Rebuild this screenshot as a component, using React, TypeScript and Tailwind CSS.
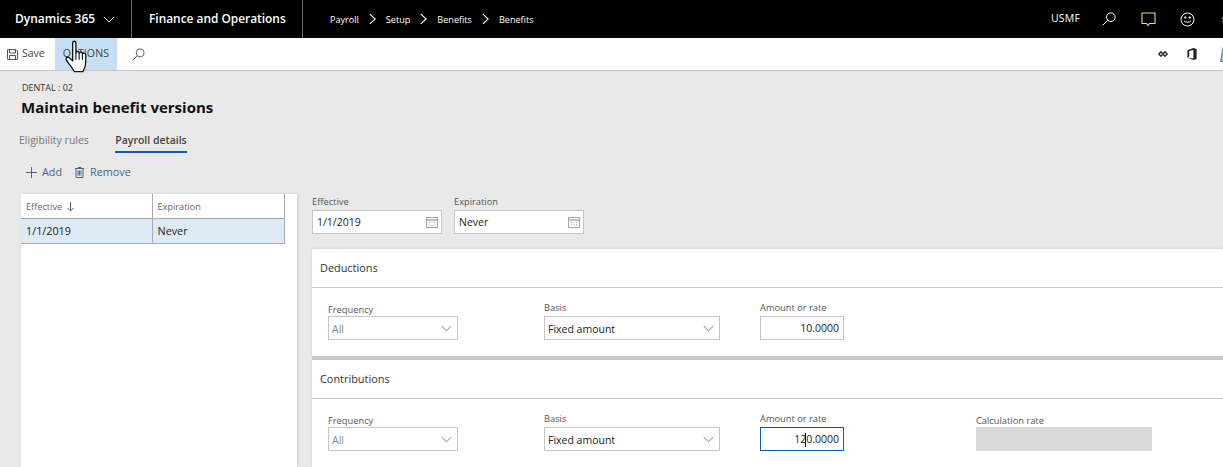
import React from "react";

const Chevron = ({ className = "" }: { className?: string }) => (
  <svg viewBox="0 0 14 8" className={className} fill="none" stroke="currentColor" strokeWidth="1.1">
    <path d="M1 1l6 6 6-6" />
  </svg>
);

const Crumb = () => (
  <svg viewBox="0 0 8 12" className="w-[7px] h-[12px] text-white" fill="none" stroke="currentColor" strokeWidth="1.300">
    <path d="M1 .5L7 6l-6 5.500" />
  </svg>
);

const Search = ({ className = "" }: { className?: string }) => (
  <svg viewBox="0 0 14 14" className={className} fill="none" stroke="currentColor" strokeWidth="1">
    <circle cx="8.800" cy="5.200" r="4.300" />
    <path d="M5.700 8.300L.7 13.300" />
  </svg>
);

const Calendar = () => (
  <svg viewBox="0 0 12 11" className="w-[12px] h-[11px] text-[#a8a8a8]" fill="none" stroke="currentColor" strokeWidth="1">
    <rect x=".5" y=".5" width="11" height="10" />
    <path d="M.5 3h11" strokeWidth="1.500" />
    <path d="M3 5.500h1M5.500 5.500h1M8 5.500h1M3 8h1M5.500 8h1M8 8h1" />
  </svg>
);

const DateField = ({ label, value, width }: { label: string; value: string; width: string }) => (
  <div className={width}>
    <div className="text-[9.300px] leading-[13px] text-[#555] h-[15px]">{label}</div>
    <div className="h-[24px] bg-white border border-[#c6c6c6] flex items-center justify-between pl-[4px] pr-[3px] text-[10.500px] text-[#222]">
      <span className="pt-[1px]">{value}</span>
      <Calendar />
    </div>
  </div>
);

const SelectField = ({
  label,
  value,
  width,
  muted,
  labelClass,
}: {
  label: string;
  value: string;
  width: string;
  muted?: boolean;
  labelClass: string;
}) => (
  <div className={width}>
    <div className={`text-[9.300px] leading-[13px] text-[#555] h-[16px] ${labelClass}`}>{label}</div>
    <div
      className={`h-[24px] bg-white border border-[#c6c6c6] flex items-center justify-between pl-[3px] pr-[3px] text-[10.500px] ${
        muted ? "text-[#7a8aa0]" : "text-[#222]"
      }`}
    >
      <span className="pt-[3px]">{value}</span>
      <Chevron className="w-[11px] h-[7px] mr-[2px] text-[#666]" />
    </div>
  </div>
);

const AmountField = ({ value, focused }: { value: React.ReactNode; focused?: boolean }) => (
  <div className="w-[84px]">
    <div className="text-[9.300px] leading-[13px] text-[#555] h-[16px] pt-[1px]">Amount or rate</div>
    <div
      className={`h-[24px] bg-white flex items-center justify-end pr-[4px] pt-[2px] text-[10.500px] text-[#222] border ${
        focused ? "border-[#0f5ba7]" : "border-[#c6c6c6]"
      }`}
    >
      {value}
    </div>
  </div>
);

const Section = ({ title, children }: { title: string; children: React.ReactNode }) => (
  <section className="bg-white h-[107px] shadow-[0_0_3px_rgba(0,0,0,0.12)]">
    <div className="h-[39px] border-b border-[#c8c8c8] flex items-center pl-[8px] text-[10.900px] text-[#333]">
      {title}
    </div>
    <div className="flex pt-[12px] pl-[16px]">{children}</div>
  </section>
);

const FormRow = ({ amount, extra, focused }: { amount: React.ReactNode; extra?: boolean; focused?: boolean }) => (
  <>
    <SelectField label="Frequency" value="All" width="w-[130px]" muted labelClass="pt-[3px]" />
    <div className="ml-[86px]">
      <SelectField label="Basis" value="Fixed amount" width="w-[176px]" labelClass="pt-[1px]" />
    </div>
    <div className="ml-[40px]">
      <AmountField value={amount} focused={focused} />
    </div>
    {extra && (
      <div className="ml-[132px] w-[176px]">
        <div className="text-[9.300px] leading-[13px] text-[#555] h-[16px] pt-[3px]">Calculation rate</div>
        <div className="h-[24px] bg-[#d9d9d9]" />
      </div>
    )}
  </>
);

export default function App() {
  return (
    <div className="relative w-[1223px] h-[467px] overflow-hidden bg-[#e9e9e9] font-['Open_Sans','Noto_Sans',sans-serif]">
      <header className="h-[38px] bg-black text-white flex items-center">
        <div className="w-[132px] h-full border-r border-[#666] flex items-center pl-[15px] text-[12px] font-semibold">
          <span>Dynamics 365</span>
          <Chevron className="w-[12px] h-[7px] ml-[8px]" />
        </div>
        <div className="w-[171px] h-full border-r border-[#666] flex items-center pl-[17px] text-[11.900px] font-semibold whitespace-nowrap">
          Finance and Operations
        </div>
        <nav className="flex items-center gap-[10px] pl-[27px] pt-[1px] text-[9.100px]">
          <span>Payroll</span>
          <Crumb />
          <span>Setup</span>
          <Crumb />
          <span>Benefits</span>
          <Crumb />
          <span>Benefits</span>
        </nav>
        <div className="ml-auto flex items-center h-full">
          <span className="text-[10.500px] tracking-[0.2px] mr-[22px]">USMF</span>
          <Search className="w-[14px] h-[14px] mr-[25px]" />
          <svg viewBox="0 0 15 15" className="w-[15px] h-[15px] mr-[24px] text-[#f3d28a]" fill="none" stroke="currentColor" strokeWidth="1.100">
            <path d="M1 1h13v10.500H8.500L7 13.500 5.500 11.500H1z" />
          </svg>
          <svg viewBox="0 0 15 15" className="w-[15px] h-[15px] mr-[25px]" fill="none" stroke="currentColor" strokeWidth="1">
            <circle cx="7.500" cy="7.500" r="6.500" />
            <path d="M4.200 9c.8 1.600 5.800 1.600 6.600 0" />
            <circle cx="5.200" cy="5.500" r=".7" fill="currentColor" />
            <circle cx="9.800" cy="5.500" r=".7" fill="currentColor" />
          </svg>
          <svg viewBox="0 0 15 15" className="w-[15px] h-[15px] mr-[-12px]" fill="none" stroke="currentColor" strokeWidth="1.500">
            <circle cx="7.500" cy="7.500" r="4.500" strokeDasharray="2 1.500" />
            <circle cx="7.500" cy="7.500" r="2" strokeWidth="1" />
          </svg>
        </div>
      </header>

      <div className="h-[33px] bg-white border-b border-[#c8c8c8] flex items-stretch">
        <div className="flex items-center pl-[7px] w-[55px] text-[10.500px] text-[#444]">
          <svg viewBox="0 0 11 11" className="w-[11px] h-[11px] mr-[4px] text-[#555]" fill="none" stroke="currentColor" strokeWidth="1">
            <path d="M.5.5h8.500l1.500 1.500v8.500H.5z" />
            <path d="M2.500 1v3h6V1M2.500 10.500V6.500h6v4" />
          </svg>
          Save
        </div>
        <div className="w-[62px] bg-[#c7dff2] flex items-center justify-center text-[10.500px] text-[#444] tracking-[0.2px]">OPTIONS</div>
        <div className="flex items-center pl-[15px]">
          <Search className="w-[13px] h-[13px] text-[#555]" />
        </div>
        <div className="ml-auto flex items-center">
          <svg viewBox="0 0 10 6" className="w-[10px] h-[6px] mr-[19px] text-[#333]" fill="none" stroke="currentColor" strokeWidth="1.500">
            <path d="M3 .8L.9 3 3 5.200 5 3zM7 .8L5 3l2 2.200L9.100 3z" />
          </svg>
          <svg viewBox="0 0 10 13" className="w-[10px] h-[12px] mr-[23px] text-[#222]" fill="currentColor">
            <path d="M0 2.500L6.500 0 10 1v11l-3.500 1L0 10.500l6.500 1V2.200L2 3.200v6.300L0 10.500z" />
          </svg>
          <svg viewBox="0 0 12 15" className="w-[12px] h-[15px] mr-[-9px]" fill="#9fb4c9" stroke="#6c7f92" strokeWidth="1">
            <path d="M3 .5L.5 14.500h11L9 .5z" />
          </svg>
        </div>
      </div>

      <main>
        <div className="pl-[21px] pt-[10px]">
          <div className="text-[9px] leading-[13px] text-[#333] pl-[1px]">DENTAL : 02</div>
          <h1 className="text-[15px] leading-[20px] mt-[3px] font-bold text-[#111]">Maintain benefit versions</h1>
        </div>

        <div className="flex items-start pl-[19px] mt-[15px] text-[10.500px] h-[24px]">
          <div className="text-[#777] pt-[1px] w-[96px]">Eligibility rules</div>
          <div className="text-[#444] font-semibold border-b-2 border-[#0f5ba7] h-[21px] w-[72px] pt-[1px] text-center whitespace-nowrap">Payroll details</div>
        </div>

        <div className="flex items-center pl-[26px] mt-[6px] h-[20px] text-[10.800px] text-[#47658f]">
          <svg viewBox="0 0 11 11" className="w-[11px] h-[11px] mr-[5px]" fill="none" stroke="currentColor" strokeWidth="1">
            <path d="M5.500 0v11M0 5.500h11" />
          </svg>
          <span>Add</span>
          <svg viewBox="0 0 9 11" className="w-[9px] h-[11px] ml-[13px] mr-[6px]" fill="none" stroke="currentColor" strokeWidth="1">
            <path d="M0 1.500h9M3 1.500V.5h3v1M1 1.500v9h7v-9M3 3.500v5M4.500 3.500v5M6 3.500v5" />
          </svg>
          <span>Remove</span>
        </div>

        <div className="flex items-start pl-[21px] mt-[12px]">
          <div className="w-[276px] h-[273px] bg-white shadow-[1px_0_3px_rgba(0,0,0,0.12)] shrink-0">
            <div className="w-[264px]">
              <div className="flex h-[25px] border-b border-[#aaaaaa] border-r text-[9.200px] text-[#666]">
                <div className="w-[131.500px] border-r border-[#aaaaaa] flex items-center pl-[5px] pt-[1px]">
                  Effective
                  <svg viewBox="0 0 7 10" className="w-[7px] h-[10px] ml-[5px] text-[#4a6487]" fill="none" stroke="currentColor" strokeWidth="1">
                    <path d="M3.500 0v9M.5 6l3 3 3-3" />
                  </svg>
                </div>
                <div className="flex-1 flex items-center pl-[5px] pt-[1px]">Expiration</div>
              </div>
              <div className="flex h-[25px] bg-[#deeaf6] border-b border-r border-[#aaaaaa] text-[10.800px] text-[#222]">
                <div className="w-[131.500px] border-r border-[#aaaaaa] flex items-center pl-[5px] pt-[1px]">1/1/2019</div>
                <div className="flex-1 flex items-center pl-[5px] pt-[1px]">Never</div>
              </div>
            </div>
          </div>

          <div className="ml-[15px] w-[911px] shrink-0">
            <div className="flex gap-[12px] pt-[1px]">
              <DateField label="Effective" value="1/1/2019" width="w-[130px]" />
              <DateField label="Expiration" value="Never" width="w-[130px]" />
            </div>
            <div className="mt-[15px] flex flex-col gap-[4px] bg-[#d0d0d0]">
              <Section title="Deductions">
                <FormRow amount="10.0000" />
              </Section>
              <Section title="Contributions">
                <FormRow
                  extra
                  focused
                  amount={
                    <span className="relative">
                      120.0000
                      <span className="absolute left-[11px] top-[1px] bottom-[1px] w-px bg-black" />
                    </span>
                  }
                />
              </Section>
            </div>
          </div>
        </div>
      </main>

      <svg viewBox="0 0 24 32" className="absolute left-[64px] top-[40px] w-[26px] h-[35px]" fill="#fff" stroke="#111" strokeWidth="1.200" strokeLinejoin="round">
        <path d="M8 2.500c0-2 3-2 3 0V12c.5-2 3-2 3 0 .5-1.500 3-1.500 3 .5.5-1 3-1 3 1v7c0 4-1 6-2.500 8.500H9.500C8 26 5.500 23 2.500 19c-1.500-2 0-4 2-3L8 19z" />
        <path d="M11 12v6M14 12v6M17 12.500V18" strokeWidth="1" />
      </svg>
    </div>
  );
}
